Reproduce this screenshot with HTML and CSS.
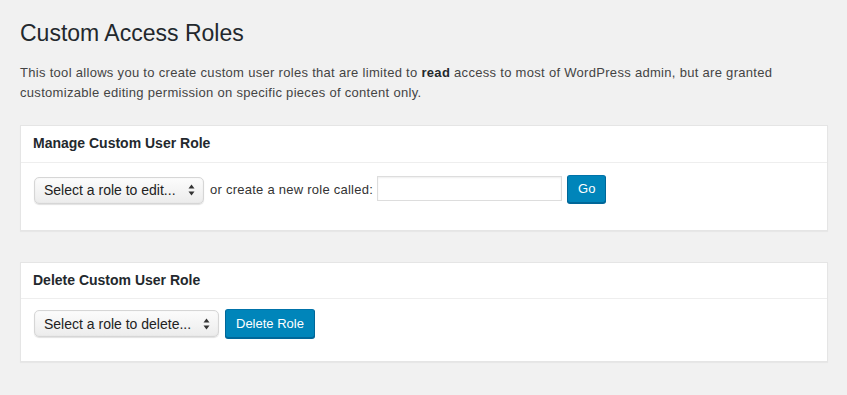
FILE: index.html
```html
<!DOCTYPE html>
<html lang="en">

<head>
    <meta charset="UTF-8">
    <meta name="viewport" content="width=device-width, initial-scale=1.0">
    <title>Custom Access Roles</title>
    <link rel="stylesheet" href="styles.css">
</head>

<body>
    <div class="wrap">
        <h1>Custom Access Roles</h1>
        <p class="intro">This tool allows you to create custom user roles that are limited to <strong>read</strong> access to most of WordPress admin, but are granted customizable editing permission on specific pieces of content only.</p>

        <!-- manage role -->
        <div class="postbox">
            <h2 class="hndle">Manage Custom User Role</h2>
            <div class="inside inside-manage">
                <div class="select-box select-edit">
                    <span>Select a role to edit...</span>
                    <svg class="arrows" width="7" height="12" viewBox="0 0 7 12"><path d="M3.5 0.5 L6.5 4.5 L0.5 4.5 Z M3.5 11.5 L6.5 7.5 L0.5 7.5 Z" fill="#333"/></svg>
                </div>
                <label class="new-label">or create a new role called:</label>
                <input class="role-input" type="text">
                <button class="button-primary">Go</button>
            </div>
        </div>

        <!-- delete role -->
        <div class="postbox">
            <h2 class="hndle">Delete Custom User Role</h2>
            <div class="inside inside-delete">
                <div class="select-box select-delete">
                    <span>Select a role to delete...</span>
                    <svg class="arrows" width="7" height="12" viewBox="0 0 7 12"><path d="M3.5 0.5 L6.5 4.5 L0.5 4.5 Z M3.5 11.5 L6.5 7.5 L0.5 7.5 Z" fill="#333"/></svg>
                </div>
                <button class="button-primary">Delete Role</button>
            </div>
        </div>
    </div>
</body>

</html>
```

FILE: styles.css
```css
/* page */
body {
    margin: 0;
    background-color: #f1f1f1;
    font-family: "Liberation Sans", Arial, sans-serif;
    color: #444;
    font-size: 13px;
}

.wrap {
    padding: 19px 19px 0 20px;
}

h1 {
    margin: 0;
    font-size: 23px;
    font-weight: 400;
    line-height: 29px;
    color: #23282d;
}

.intro {
    margin: 15px 0 23px;
    line-height: 19.5px;
    letter-spacing: 0.3px;
}

.intro strong {
    color: #23282d;
}

/* boxes */
.postbox {
    background-color: #fff;
    border: 1px solid #e5e5e5;
    box-shadow: 0 1px 1px rgba(0, 0, 0, 0.04);
    margin-bottom: 31px;
}

.hndle {
    margin: 0;
    padding: 8px 12px;
    font-size: 14px;
    line-height: 1.4;
    font-weight: 700;
    color: #23282d;
    border-bottom: 1px solid #eee;
}

.inside {
    display: flex;
    align-items: flex-start;
    padding: 0 12px 0 13px;
}

.inside-manage {
    padding-top: 12px;
    padding-bottom: 26px;
}

.inside-delete {
    padding-top: 10px;
    padding-bottom: 23px;
}

/* fake native select */
.select-box {
    display: flex;
    align-items: center;
    justify-content: space-between;
    box-sizing: border-box;
    height: 27px;
    padding: 0 8px 0 9px;
    border: 1px solid #d6d6d6;
    border-radius: 5px;
    background: linear-gradient(#fcfcfc, #ececec);
    box-shadow: 0 1px 1px rgba(0, 0, 0, 0.12), inset 0 0 2px rgba(0, 0, 0, 0.06);
    font-size: 14px;
    color: #222;
}

.select-edit {
    width: 170px;
    margin-top: 2px;
}

.select-delete {
    width: 185px;
    margin-top: 1px;
}

.new-label {
    margin: 7px 4px 0 6px;
    color: #333;
    letter-spacing: 0.25px;
}

.role-input {
    box-sizing: border-box;
    width: 185px;
    height: 25px;
    margin: 1px 5px 0 0;
    border: 1px solid #ddd;
    box-shadow: inset 0 1px 2px rgba(0, 0, 0, 0.07);
    background-color: #fff;
}

.button-primary {
    box-sizing: border-box;
    height: 28px;
    padding: 0 10px 1px;
    margin: 0;
    border: 1px solid #0073aa;
    border-color: #0073aa #006799 #006799;
    border-radius: 3px;
    background-color: #0085ba;
    box-shadow: 0 1px 0 #006799;
    color: #fff;
    font-family: "Liberation Sans", Arial, sans-serif;
    font-size: 13px;
    cursor: pointer;
}

.inside-delete .button-primary {
    margin-left: 6px;
    height: 29px;
}
```
